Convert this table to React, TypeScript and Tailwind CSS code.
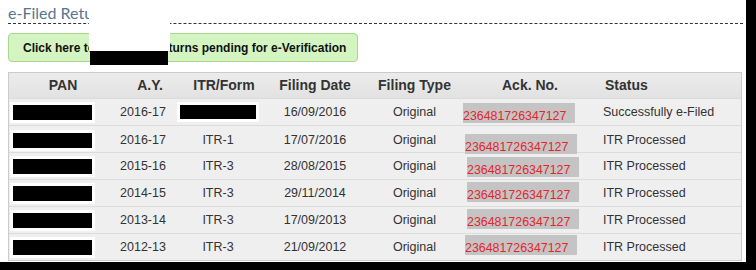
const rows = [
  { ay: "2016-17", form: null, date: "16/09/2016", status: "Successfully e-Filed", ack: "ml-[-2px] mt-[4px]" },
  { ay: "2016-17", form: "ITR-1", date: "17/07/2016", status: "ITR Processed", ack: "ml-[0px] mt-[8px]" },
  { ay: "2015-16", form: "ITR-3", date: "28/08/2015", status: "ITR Processed", ack: "ml-[2px] mt-[4px]" },
  { ay: "2014-15", form: "ITR-3", date: "29/11/2014", status: "ITR Processed", ack: "ml-[2px] mt-[2px]" },
  { ay: "2013-14", form: "ITR-3", date: "17/09/2013", status: "ITR Processed", ack: "ml-[2px] mt-[2px]" },
  { ay: "2012-13", form: "ITR-3", date: "21/09/2012", status: "ITR Processed", ack: "ml-[0px] mt-[1px]" },
];

const cols = "grid grid-cols-[93px_82px_87px_93px_101px_125px_151px]";

function Redacted({ w, h }: { w: string; h: string }) {
  return (
    <div className="flex items-center bg-white px-[3px] py-[3px]">
      <div className={`${w} ${h} bg-black`} />
    </div>
  );
}

export default function App() {
  return (
    <div className="h-[270px] w-[756px] bg-black font-['Liberation_Sans',Arial,sans-serif]">
      <div className="relative h-[262px] w-[746px] overflow-hidden bg-white pl-[8px]">
        {/* heading */}
        <div className="h-[24px] w-[735px] border-b border-dashed border-[#333] pt-[4px]">
          <h2 className="font-['Lato',sans-serif] text-[16px] font-normal leading-[17px] text-[#58768f]">
            e-Filed Returns
          </h2>
        </div>

        <div className="mt-[9px] flex">
          <button className="h-[29px] w-[350px] rounded-[4px] border border-[#a9d88c] bg-[#d4f5c2] pl-[14px] text-left text-[12px] font-bold text-[#111]">
            Click here to view your returns pending for e-Verification
          </button>
        </div>

        {/* table */}
        <div className="mt-[10px] w-[734px] border border-[#cbcbcb] text-[12.5px] text-[#333]">
          <div className={`${cols} h-[25px] bg-gradient-to-b from-[#ececec] to-[#e2e2e2] text-[14px] font-bold text-[#333]`}>
            <div className="flex items-center justify-center pl-[15px]">PAN</div>
            <div className="flex items-center justify-center pl-[14px]">A.Y.</div>
            <div className="flex items-center justify-center pr-[7px]">ITR/Form</div>
            <div className="flex items-center justify-center pr-[5px]">Filing Date</div>
            <div className="flex items-center justify-center">Filing Type</div>
            <div className="flex items-center justify-center pl-[5px]">Ack. No.</div>
            <div className="flex items-center pl-[15px]">Status</div>
          </div>
          {rows.map((r, i) => (
            <div key={i} className={`${cols} h-[27px] border-t border-[#dcdcdc] bg-[#efefef]`}>
              <div className="flex items-center pl-[1px]">
                <Redacted w="w-[79px]" h="h-[15px]" />
              </div>
              <div className="flex items-center justify-center">{r.ay}</div>
              <div className="flex items-center justify-center pr-[19px]">
                {r.form ?? <Redacted w="w-[76px]" h="h-[14px]" />}
              </div>
              <div className="flex items-center justify-center pr-[5px]">{r.date}</div>
              <div className="flex items-center justify-center">Original</div>
              <div className="flex items-start">
                <div className={`${r.ack} flex h-[20px] w-[112px] items-end overflow-hidden bg-[#c4c4c4] pb-[1px] text-[12.4px] leading-none text-[#e3262d]`}>
                  236481726347127
                </div>
              </div>
              <div className="flex items-center pl-[13px]">{r.status}</div>
            </div>
          ))}
        </div>

        {/* redaction over the heading */}
        <div className="absolute left-[89px] top-0 h-[51px] w-[81px] bg-white" />
        <div className="absolute left-[90px] top-[51px] h-[14px] w-[78px] bg-black" />
      </div>
    </div>
  );
}
